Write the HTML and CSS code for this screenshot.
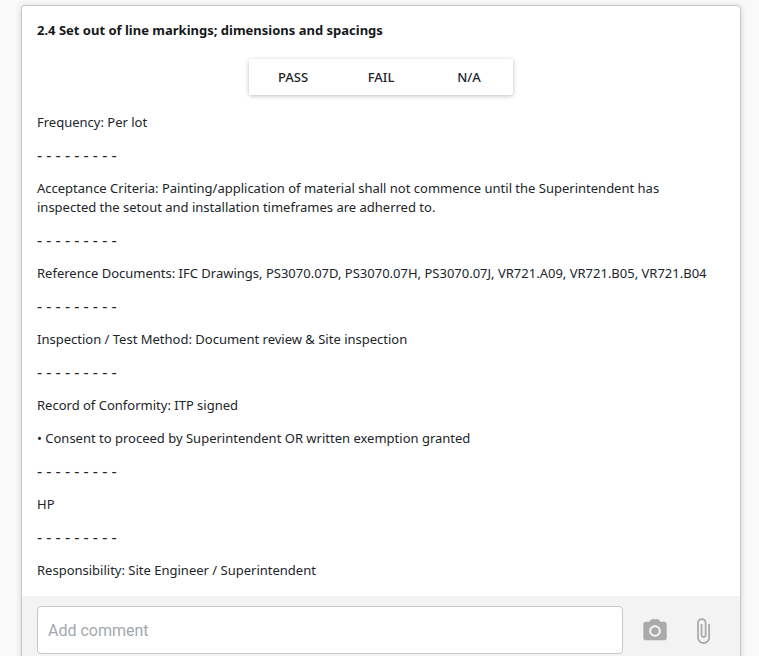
FILE: index.html
```html
<!DOCTYPE html>
<html lang="en">
<head>
<meta charset="utf-8">
<title>Set out of line markings</title>
<link rel="stylesheet" href="styles.css">
</head>
<body>
<main class="card">
  <section class="content">
    <h1 class="title">2.4 Set out of line markings; dimensions and spacings</h1>
    <div class="choices" role="group" aria-label="Result">
      <button class="choice" type="button">PASS</button>
      <button class="choice" type="button">FAIL</button>
      <button class="choice" type="button">N/A</button>
    </div>
    <p>Frequency: Per lot</p>
    <p class="rule">- - - - - - - - -</p>
    <p>Acceptance Criteria: Painting/application of material shall not commence until the Superintendent has inspected the setout and installation timeframes are adherred to.</p>
    <p class="rule">- - - - - - - - -</p>
    <p>Reference Documents: IFC Drawings, PS3070.07D, PS3070.07H, PS3070.07J, VR721.A09, VR721.B05, VR721.B04</p>
    <p class="rule">- - - - - - - - -</p>
    <p>Inspection / Test Method: Document review &amp; Site inspection</p>
    <p class="rule">- - - - - - - - -</p>
    <p>Record of Conformity: ITP signed</p>
    <p>• Consent to proceed by Superintendent OR written exemption granted</p>
    <p class="rule">- - - - - - - - -</p>
    <p>HP</p>
    <p class="rule">- - - - - - - - -</p>
    <p>Responsibility: Site Engineer / Superintendent</p>
  </section>
  <form class="comment">
    <input class="comment-input" type="text" placeholder="Add comment" aria-label="Add comment">
    <button class="icon-button" type="button" aria-label="Add photo">
      <svg class="icon" viewBox="0 0 24 24"><circle cx="12" cy="12" r="3.2"/><path d="M9 2 7.170 4H4c-1.100 0-2 .9-2 2v12c0 1.100.9 2 2 2h16c1.100 0 2-.9 2-2V6c0-1.100-.9-2-2-2h-3.170L15 2H9zm3 15c-2.760 0-5-2.240-5-5s2.240-5 5-5 5 2.240 5 5-2.240 5-5 5z"/></svg>
    </button>
    <button class="icon-button" type="button" aria-label="Attach file">
      <svg class="icon" viewBox="0 0 24 24"><path d="M16.500 6v11.500c0 2.210-1.790 4-4 4s-4-1.790-4-4V5c0-1.380 1.120-2.500 2.500-2.500s2.500 1.120 2.500 2.500v10.500c0 .55-.45 1-1 1s-1-.45-1-1V6H10v9.500c0 1.380 1.120 2.500 2.500 2.500s2.500-1.120 2.500-2.500V5c0-2.210-1.790-4-4-4S7 2.790 7 5v12.500c0 3.040 2.460 5.500 5.500 5.500s5.500-2.460 5.500-5.500V6h-1.500z"/></svg>
    </button>
  </form>
</main>
</body>
</html>
```
FILE: styles.css
```css
* {
  box-sizing: border-box;
}

html {
  scrollbar-width: none;
}

body {
  margin: 0;
  padding: 5px 18px 16px 21px;
  background: #f9f9f9;
  color: #212529;
  font: 13px/19px "Segoe UI", "Noto Sans", "Open Sans", sans-serif;
}

.card {
  border: 1px solid #c8c8c8;
  border-radius: 4px;
  background: #fff;
  box-shadow: 0 1px 6px rgba(0, 0, 0, 0.16);
  overflow: hidden;
}

.content {
  padding: 15px 15px 16px;
}

.title {
  margin: 0 0 19px;
  color: #16181b;
  font-size: 13px;
  font-weight: 700;
  line-height: 19px;
}

.choices {
  display: flex;
  width: fit-content;
  margin: 0 auto 18px;
  border-radius: 2px;
  box-shadow: 0 1px 4px rgba(0, 0, 0, 0.26);
}

.choice {
  width: 88px;
  height: 36px;
  padding: 0;
  border: 0;
  border-radius: 2px;
  background: #fff;
  color: #212529;
  font: inherit;
  font-weight: 500;
}

p {
  margin: 0 0 14px;
  padding-right: 8px;
}

p:last-child {
  margin-bottom: 0;
}

.rule {
  font-size: 16px;
}

.comment {
  display: flex;
  padding: 10px 13px 10px 15px;
  background: #f3f3f3;
}

.comment-input {
  flex: 1;
  min-width: 0;
  height: 48px;
  margin-right: 8px;
  padding: 0 10px;
  border: 1px solid #c8c8c8;
  border-radius: 4px;
  background: #fff;
  color: #212529;
  font: 16px/24px Roboto, sans-serif;
}

.comment-input::placeholder {
  color: #a2a8b0;
  opacity: 1;
}

.icon-button {
  display: grid;
  place-items: center;
  width: 48px;
  height: 48px;
  padding: 2px 0 0;
  border: 0;
  background: none;
  color: #aaa;
}

.icon {
  width: 28px;
  height: 28px;
  fill: currentColor;
}
```
